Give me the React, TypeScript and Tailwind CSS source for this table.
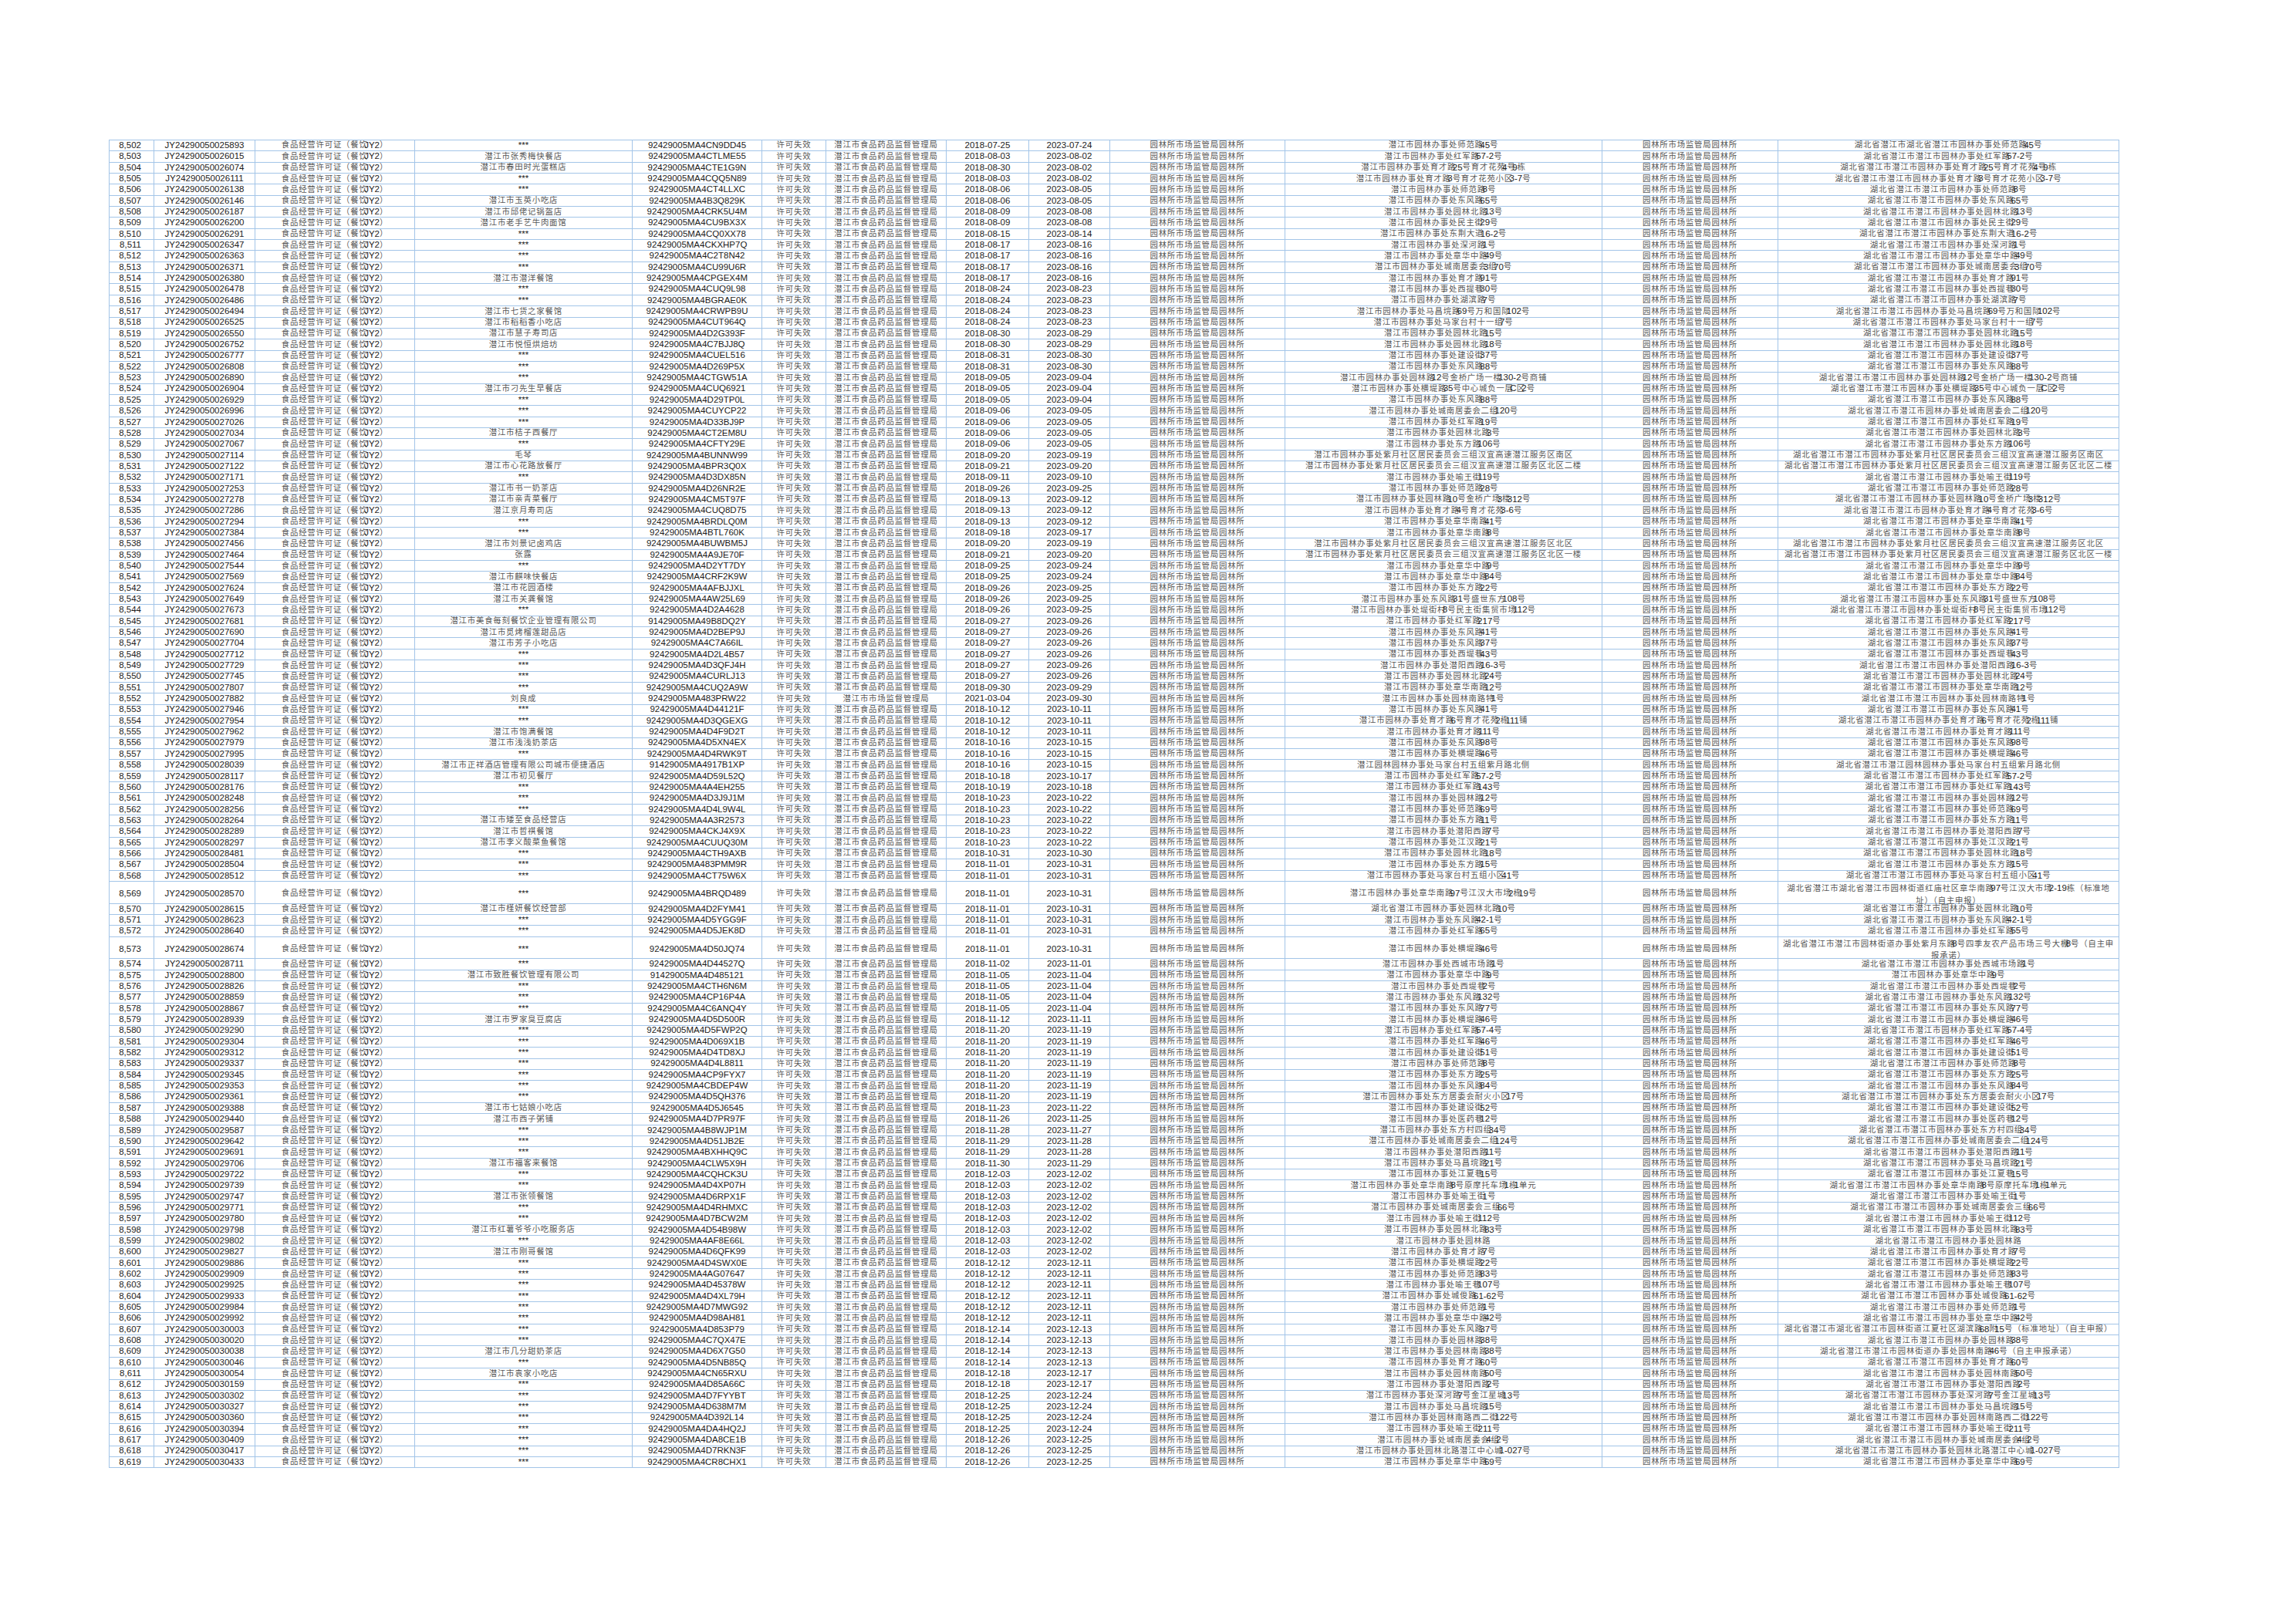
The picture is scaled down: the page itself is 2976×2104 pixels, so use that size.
import React from "react";

const DATA: string[] = [
  "JY24290050025893|***|92429005MA4CN9DD45|2018-07-25|2023-07-24|潜江市园林办事处师范路45号|湖北省潜江市湖北省潜江市园林办事处师范路45号",
  "JY24290050026015|潜江市张秀梅快餐店|92429005MA4CTLME55|2018-08-03|2023-08-02|潜江市园林办事处红军路57-2号",
  "JY24290050026074|潜江市春田时光蛋糕店|92429005MA4CTE1G9N|2018-08-30|2023-08-02|潜江市园林办事处育才路25号育才花苑4号9栋",
  "JY24290050026111|***|92429005MA4CQQ5N89|2018-08-03|2023-08-02|潜江市园林办事处育才路3号育才花苑小区3-7号",
  "JY24290050026138|***|92429005MA4CT4LLXC|2018-08-06|2023-08-05|潜江市园林办事处师范路8号",
  "JY24290050026146|潜江市玉英小吃店|92429005MA4B3Q829K|2018-08-06|2023-08-05|潜江市园林办事处东风路65号",
  "JY24290050026187|潜江市邱佬记锅盔店|92429005MA4CRK5U4M|2018-08-09|2023-08-08|潜江市园林办事处园林北路13号",
  "JY24290050026200|潜江市老手艺牛肉面馆|92429005MA4CU9BX3X|2018-08-09|2023-08-08|潜江市园林办事处民主街29号",
  "JY24290050026291|***|92429005MA4CQ0XX78|2018-08-15|2023-08-14|潜江市园林办事处东荆大道16-2号",
  "JY24290050026347|***|92429005MA4CKXHP7Q|2018-08-17|2023-08-16|潜江市园林办事处深河路1号",
  "JY24290050026363|***|92429005MA4C2T8N42|2018-08-17|2023-08-16|潜江市园林办事处章华中路49号",
  "JY24290050026371|***|92429005MA4CU99U6R|2018-08-17|2023-08-16|潜江市园林办事处城南居委会3组70号",
  "JY24290050026380|潜江市潜洋餐馆|92429005MA4CPGEX4M|2018-08-17|2023-08-16|潜江市园林办事处育才路91号",
  "JY24290050026478|***|92429005MA4CUQ9L98|2018-08-24|2023-08-23|潜江市园林办事处西提巷30号",
  "JY24290050026486|***|92429005MA4BGRAE0K|2018-08-24|2023-08-23|潜江市园林办事处湖滨路7号",
  "JY24290050026494|潜江市七货之家餐馆|92429005MA4CRWPB9U|2018-08-24|2023-08-23|潜江市园林办事处马昌垸路69号万和国际102号",
  "JY24290050026525|潜江市稻稻香小吃店|92429005MA4CUT964Q|2018-08-24|2023-08-23|潜江市园林办事处马家台村十一组7号",
  "JY24290050026550|潜江市慧子寿司店|92429005MA4D2G393F|2018-08-30|2023-08-29|潜江市园林办事处园林北路15号",
  "JY24290050026752|潜江市悦恒烘焙坊|92429005MA4C7BJJ8Q|2018-08-30|2023-08-29|潜江市园林办事处园林北路18号",
  "JY24290050026777|***|92429005MA4CUEL516|2018-08-31|2023-08-30|潜江市园林办事处建设街37号",
  "JY24290050026808|***|92429005MA4D269P5X|2018-08-31|2023-08-30|潜江市园林办事处东风路88号",
  "JY24290050026890|***|92429005MA4CTGW51A|2018-09-05|2023-09-04|潜江市园林办事处园林路12号金桥广场一楼130-2号商铺",
  "JY24290050026904|潜江市刁先生早餐店|92429005MA4CUQ6921|2018-09-05|2023-09-04|潜江市园林办事处横堤路35号中心城负一层C区2号",
  "JY24290050026929|***|92429005MA4D29TP0L|2018-09-05|2023-09-04|潜江市园林办事处东风路88号",
  "JY24290050026996|***|92429005MA4CUYCP22|2018-09-06|2023-09-05|潜江市园林办事处城南居委会二组120号",
  "JY24290050027026|***|92429005MA4D33BJ9P|2018-09-06|2023-09-05|潜江市园林办事处红军路19号",
  "JY24290050027034|潜江市桔子西餐厅|92429005MA4CT2EM8U|2018-09-06|2023-09-05|潜江市园林办事处园林北路3号",
  "JY24290050027067|***|92429005MA4CFTY29E|2018-09-06|2023-09-05|潜江市园林办事处东方路106号",
  "JY24290050027114|毛琴|92429005MA4BUNNW99|2018-09-20|2023-09-19|潜江市园林办事处紫月社区居民委员会三组汉宜高速潜江服务区南区",
  "JY24290050027122|潜江市心花路放餐厅|92429005MA4BPR3Q0X|2018-09-21|2023-09-20|潜江市园林办事处紫月社区居民委员会三组汉宜高速潜江服务区北区二楼",
  "JY24290050027171|***|92429005MA4D3DX85N|2018-09-11|2023-09-10|潜江市园林办事处喻王街119号",
  "JY24290050027253|潜江市书一奶茶店|92429005MA4D26NR2E|2018-09-26|2023-09-25|潜江市园林办事处师范路28号",
  "JY24290050027278|潜江市亲青菜餐厅|92429005MA4CM5T97F|2018-09-13|2023-09-12|潜江市园林办事处园林路10号金桥广场3楼312号",
  "JY24290050027286|潜江京月寿司店|92429005MA4CUQ8D75|2018-09-13|2023-09-12|潜江市园林办事处育才路4号育才花苑3-6号",
  "JY24290050027294|***|92429005MA4BRDLQ0M|2018-09-13|2023-09-12|潜江市园林办事处章华南路41号",
  "JY24290050027384|***|92429005MA4BTL760K|2018-09-18|2023-09-17|潜江市园林办事处章华南路8号",
  "JY24290050027456|潜江市刘景记卤鸡店|92429005MA4BUWBM5J|2018-09-20|2023-09-19|潜江市园林办事处紫月社区居民委员会三组汉宜高速潜江服务区北区",
  "JY24290050027464|张露|92429005MA4A9JE70F|2018-09-21|2023-09-20|潜江市园林办事处紫月社区居民委员会三组汉宜高速潜江服务区北区一楼",
  "JY24290050027544|***|92429005MA4D2YT7DY|2018-09-25|2023-09-24|潜江市园林办事处章华中路9号",
  "JY24290050027569|潜江市麒味快餐店|92429005MA4CRF2K9W|2018-09-25|2023-09-24|潜江市园林办事处章华中路84号",
  "JY24290050027624|潜江市花园酒楼|92429005MA4AFBJJXL|2018-09-26|2023-09-25|潜江市园林办事处东方路22号",
  "JY24290050027649|潜江市关龚餐馆|92429005MA4AW25L69|2018-09-26|2023-09-25|潜江市园林办事处东风路31号盛世东方108号",
  "JY24290050027673|***|92429005MA4D2A4628|2018-09-26|2023-09-25|潜江市园林办事处堤街村8号民主街集贸市场112号",
  "JY24290050027681|潜江市美食每刻餐饮企业管理有限公司|91429005MA49B8DQ2Y|2018-09-27|2023-09-26|潜江市园林办事处红军路217号",
  "JY24290050027690|潜江市觅烤榴莲甜品店|92429005MA4D2BEP9J|2018-09-27|2023-09-26|潜江市园林办事处东风路41号",
  "JY24290050027704|潜江市芳子小吃店|92429005MA4C7A66IL|2018-09-27|2023-09-26|潜江市园林办事处东风路37号",
  "JY24290050027712|***|92429005MA4D2L4B57|2018-09-27|2023-09-26|潜江市园林办事处西堤巷43号",
  "JY24290050027729|***|92429005MA4D3QFJ4H|2018-09-27|2023-09-26|潜江市园林办事处潜阳西路16-3号",
  "JY24290050027745|***|92429005MA4CURLJ13|2018-09-27|2023-09-26|潜江市园林办事处园林北路24号",
  "JY24290050027807|***|92429005MA4CUQ2A9W|2018-09-30|2023-09-29|潜江市园林办事处章华南路12号",
  "JY24290050027882|刘良成|92429005MA483PRW22|2021-03-04|2023-09-30|潜江市园林办事处园林南路特1号",
  "JY24290050027946|***|92429005MA4D44121F|2018-10-12|2023-10-11|潜江市园林办事处东风路41号",
  "JY24290050027954|***|92429005MA4D3QGEXG|2018-10-12|2023-10-11|潜江市园林办事处育才路6号育才花苑2栋111铺",
  "JY24290050027962|潜江市饱满餐馆|92429005MA4D4F9D2T|2018-10-12|2023-10-11|潜江市园林办事处育才路111号",
  "JY24290050027979|潜江市浅浅奶茶店|92429005MA4D5XN4EX|2018-10-16|2023-10-15|潜江市园林办事处东风路98号",
  "JY24290050027995|***|92429005MA4D4RWK9T|2018-10-16|2023-10-15|潜江市园林办事处横堤路46号",
  "JY24290050028039|潜江市正祥酒店管理有限公司城市便捷酒店|91429005MA4917B1XP|2018-10-16|2023-10-15|潜江园林园林办事处马家台村五组紫月路北侧",
  "JY24290050028117|潜江市初见餐厅|92429005MA4D59L52Q|2018-10-18|2023-10-17|潜江市园林办事处红军路57-2号",
  "JY24290050028176|***|92429005MA4A4EH255|2018-10-19|2023-10-18|潜江市园林办事处红军路143号",
  "JY24290050028248|***|92429005MA4D3J9J1M|2018-10-23|2023-10-22|潜江市园林办事处园林路12号",
  "JY24290050028256|***|92429005MA4D4L9W4L|2018-10-23|2023-10-22|潜江市园林办事处师范路69号",
  "JY24290050028264|潜江市矮至食品经营店|92429005MA4A3R2573|2018-10-23|2023-10-22|潜江市园林办事处东方路11号",
  "JY24290050028289|潜江市哲祺餐馆|92429005MA4CKJ4X9X|2018-10-23|2023-10-22|潜江市园林办事处潜阳西路7号",
  "JY24290050028297|潜江市李义酸菜鱼餐馆|92429005MA4CUUQ30M|2018-10-23|2023-10-22|潜江市园林办事处江汉路21号",
  "JY24290050028481|***|92429005MA4CTH9AXB|2018-10-31|2023-10-30|潜江市园林办事处园林北路18号",
  "JY24290050028504|***|92429005MA483PMM9R|2018-11-01|2023-10-31|潜江市园林办事处东方路15号",
  "JY24290050028512|***|92429005MA4CT75W6X|2018-11-01|2023-10-31|潜江市园林办事处马家台村五组小区41号",
  "JY24290050028570|***|92429005MA4BRQD489|2018-11-01|2023-10-31|潜江市园林办事处章华南路97号江汉大市场2栋19号|湖北省潜江市湖北省潜江市园林街道红庙社区章华南路97号江汉大市场2-19栋（标准地^址）（自主申报）",
  "JY24290050028615|潜江市槿妍餐饮经营部|92429005MA4D2FYM41|2018-11-01|2023-10-31|湖北省潜江市园林办事处园林北路10号|湖北省潜江市潜江市园林办事处园林北路10号",
  "JY24290050028623|***|92429005MA4D5YGG9F|2018-11-01|2023-10-31|潜江市园林办事处东风路42-1号",
  "JY24290050028640|***|92429005MA4D5JEK8D|2018-11-01|2023-10-31|潜江市园林办事处红军路65号|湖北省潜江市潜江市园林办事处红军路55号",
  "JY24290050028674|***|92429005MA4D50JQ74|2018-11-01|2023-10-31|潜江市园林办事处横堤路46号|湖北省潜江市潜江市园林街道办事处紫月东路8号四季友农产品市场三号大棚8号（自主申^报承诺）",
  "JY24290050028711|***|92429005MA4D44527Q|2018-11-02|2023-11-01|潜江市园林办事处西城市场路1号",
  "JY24290050028800|潜江市致胜餐饮管理有限公司|91429005MA4D485121|2018-11-05|2023-11-04|潜江市园林办事处章华中路9号|潜江市园林办事处章华中路9号",
  "JY24290050028826|***|92429005MA4CTH6N6M|2018-11-05|2023-11-04|潜江市园林办事处西堤巷2号",
  "JY24290050028859|***|92429005MA4CP16P4A|2018-11-05|2023-11-04|潜江市园林办事处东风路132号",
  "JY24290050028867|***|92429005MA4C6ANQ4Y|2018-11-05|2023-11-04|潜江市园林办事处东风路77号",
  "JY24290050028939|潜江市罗家臭豆腐店|92429005MA4D5D500R|2018-11-12|2023-11-11|潜江市园林办事处横堤路46号",
  "JY24290050029290|***|92429005MA4D5FWP2Q|2018-11-20|2023-11-19|潜江市园林办事处红军路57-4号",
  "JY24290050029304|***|92429005MA4D069X1B|2018-11-20|2023-11-19|潜江市园林办事处红军路46号",
  "JY24290050029312|***|92429005MA4D4TD8XJ|2018-11-20|2023-11-19|潜江市园林办事处建设街51号",
  "JY24290050029337|***|92429005MA4D4L8811|2018-11-20|2023-11-19|潜江市园林办事处师范路8号",
  "JY24290050029345|***|92429005MA4CP9FYX7|2018-11-20|2023-11-19|潜江市园林办事处东方路25号",
  "JY24290050029353|***|92429005MA4CBDEP4W|2018-11-20|2023-11-19|潜江市园林办事处东风路84号",
  "JY24290050029361|***|92429005MA4D5QH376|2018-11-20|2023-11-19|潜江市园林办事处东方居委会耐火小区17号",
  "JY24290050029388|潜江市七姑娘小吃店|92429005MA4D5J6545|2018-11-23|2023-11-22|潜江市园林办事处建设街52号",
  "JY24290050029440|潜江市西子粥铺|92429005MA4D7PR97F|2018-11-26|2023-11-25|潜江市园林办事处医药巷12号",
  "JY24290050029587|***|92429005MA4B8WJP1M|2018-11-28|2023-11-27|潜江市园林办事处东方村四组34号",
  "JY24290050029642|***|92429005MA4D51JB2E|2018-11-29|2023-11-28|潜江市园林办事处城南居委会二组124号",
  "JY24290050029691|***|92429005MA4BXHHQ9C|2018-11-29|2023-11-28|潜江市园林办事处潜阳西路11号",
  "JY24290050029706|潜江市福客来餐馆|92429005MA4CLW5X9H|2018-11-30|2023-11-29|潜江市园林办事处马昌垸路21号",
  "JY24290050029722|***|92429005MA4CQHCK3U|2018-12-03|2023-12-02|潜江市园林办事处江夏巷15号",
  "JY24290050029739|***|92429005MA4D4XP07H|2018-12-03|2023-12-02|潜江市园林办事处章华南路8号原摩托车场1栋1单元",
  "JY24290050029747|潜江市张领餐馆|92429005MA4D6RPX1F|2018-12-03|2023-12-02|潜江市园林办事处喻王街1号",
  "JY24290050029771|***|92429005MA4D4RHMXC|2018-12-03|2023-12-02|潜江市园林办事处城南居委会三组66号",
  "JY24290050029780|***|92429005MA4D7BCW2M|2018-12-03|2023-12-02|潜江市园林办事处喻王街112号",
  "JY24290050029798|潜江市红薯爷爷小吃服务店|92429005MA4D54B98W|2018-12-03|2023-12-02|潜江市园林办事处园林北路83号",
  "JY24290050029802|***|92429005MA4AF8E66L|2018-12-03|2023-12-02|潜江市园林办事处园林路",
  "JY24290050029827|潜江市刚哥餐馆|92429005MA4D6QFK99|2018-12-03|2023-12-02|潜江市园林办事处育才路7号",
  "JY24290050029886|***|92429005MA4D4SWX0E|2018-12-12|2023-12-11|潜江市园林办事处横堤路22号",
  "JY24290050029909|***|92429005MA4AG07647|2018-12-12|2023-12-11|潜江市园林办事处师范路83号",
  "JY24290050029925|***|92429005MA4D45378W|2018-12-12|2023-12-11|潜江市园林办事处喻王巷107号",
  "JY24290050029933|***|92429005MA4D4XL79H|2018-12-12|2023-12-11|潜江市园林办事处城俊路61-62号",
  "JY24290050029984|***|92429005MA4D7MWG92|2018-12-12|2023-12-11|潜江市园林办事处师范路1号",
  "JY24290050029992|***|92429005MA4D98AH81|2018-12-12|2023-12-11|潜江市园林办事处章华中路42号",
  "JY24290050030003|***|92429005MA4D853P79|2018-12-14|2023-12-13|潜江市园林办事处东风路37号|湖北省潜江市湖北省潜江市园林街道江夏社区湖滨路68附15号（标准地址）（自主申报）",
  "JY24290050030020|***|92429005MA4C7QX47E|2018-12-14|2023-12-13|潜江市园林办事处园林路38号",
  "JY24290050030038|潜江市几分甜奶茶店|92429005MA4D6X7G50|2018-12-14|2023-12-13|潜江市园林办事处园林南路38号|湖北省潜江市潜江市园林街道办事处园林南路46号（自主申报承诺）",
  "JY24290050030046|***|92429005MA4D5NB85Q|2018-12-14|2023-12-13|潜江市园林办事处育才路60号",
  "JY24290050030054|潜江市袁家小吃店|92429005MA4CN65RXU|2018-12-18|2023-12-17|潜江市园林办事处园林南路50号",
  "JY24290050030159|***|92429005MA4D85A66C|2018-12-18|2023-12-17|潜江市园林办事处潜阳西路2号",
  "JY24290050030302|***|92429005MA4D7FYYBT|2018-12-25|2023-12-24|潜江市园林办事处深河路7号金江星城13号",
  "JY24290050030327|***|92429005MA4D638M7M|2018-12-25|2023-12-24|潜江市园林办事处马昌垸路15号",
  "JY24290050030360|***|92429005MA4D392L14|2018-12-25|2023-12-24|潜江市园林办事处园林南路西二街122号",
  "JY24290050030394|***|92429005MA4DA4HQ2J|2018-12-25|2023-12-24|潜江市园林办事处喻王街211号",
  "JY24290050030409|***|92429005MA4DA8CE1B|2018-12-26|2023-12-25|潜江市园林办事处城南居委会4组2号",
  "JY24290050030417|***|92429005MA4D7RKN3F|2018-12-26|2023-12-25|潜江市园林办事处园林北路潜江中心城1-027号",
  "JY24290050030433|***|92429005MA4CR8CHX1|2018-12-26|2023-12-25|潜江市园林办事处章华中路69号",
];

const COLS =
  "grid grid-cols-[58px_131px_207px_282px_168px_83px_156px_107px_105px_227px_411px_228px_442px]";

function Txt({ s }: { s: string }) {
  const parts = s.match(/[\x00-\x7F]+|[^\x00-\x7F]+/g) || [];
  return (
    <>
      {parts.map((p, i) => {
        const ascii = /^[\x00-\x7F]/.test(p);
        if (!ascii) {
          return (
            <span key={i} className="text-[10.4px] tracking-[0.8px] text-[#575757]">
              {p}
            </span>
          );
        }
        return (
          <span
            key={i}
            className={
              i > 0
                ? "-ml-[4.5px] text-[11.5px] text-[#1c1c1c]"
                : "text-[11.5px] text-[#1c1c1c]"
            }
          >
            {p}
          </span>
        );
      })}
    </>
  );
}

function Cell({ s }: { s: string }) {
  return (
    <div className="flex items-center justify-center whitespace-nowrap border-r border-[#a3c5e8] leading-none">
      <Txt s={s} />
    </div>
  );
}

export default function App() {
  return (
    <div className="w-[2976px] h-[2104px] bg-white pt-[181px] pl-[141px] font-['Liberation_Sans','Noto_Sans_CJK_SC',sans-serif]">
      <div className="w-[2606px] border-l border-t border-[#a3c5e8]">
        {DATA.map((line, idx) => {
          const f = line.split("|");
          const num = 8502 + idx;
          const numStr = "8," + String(num - 8000);
          const addr1 = f[5];
          const addr2 = f[6] !== undefined ? f[6] : "湖北省潜江市" + addr1;
          const tall = addr2.includes("^");
          const bureau = num === 8552 ? "潜江市市场监督管理局" : "潜江市食品药品监督管理局";
          return (
            <div
              key={num}
              className={`${COLS} border-b border-[#a3c5e8] ${tall ? "h-[28.7px]" : "h-[14.35px]"}`}
            >
              <div className="flex items-center justify-end pr-[16px] whitespace-nowrap border-r border-[#a3c5e8] leading-none">
                <Txt s={numStr} />
              </div>
              <Cell s={f[0]} />
              <Cell s="食品经营许可证（餐饮JY2）" />
              <Cell s={f[1]} />
              <Cell s={f[2]} />
              <Cell s="许可失效" />
              <Cell s={bureau} />
              <Cell s={f[3]} />
              <Cell s={f[4]} />
              <Cell s="园林所市场监管局园林所" />
              <Cell s={addr1} />
              <Cell s="园林所市场监管局园林所" />
              {tall ? (
                <div className="flex flex-col items-center justify-center whitespace-nowrap border-r border-[#a3c5e8] leading-[13.5px]">
                  {addr2.split("^").map((l, j) => (
                    <div key={j}>
                      <Txt s={l} />
                    </div>
                  ))}
                </div>
              ) : (
                <Cell s={addr2} />
              )}
            </div>
          );
        })}
      </div>
    </div>
  );
}
